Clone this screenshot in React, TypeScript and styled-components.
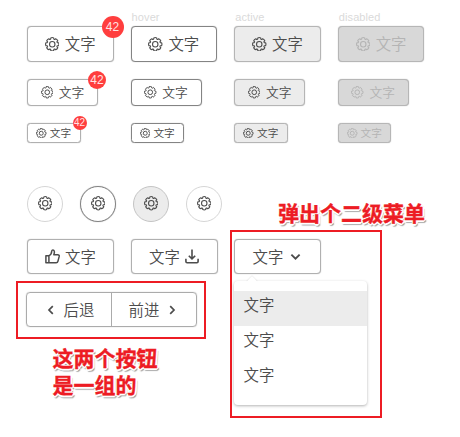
import React from "react";
import styled, { createGlobalStyle, css } from "styled-components";

type Size = "large" | "medium" | "small";
type State = "normal" | "hover" | "active" | "disabled";

const GlobalStyle = createGlobalStyle`
  *, *::before, *::after { box-sizing: border-box; }
  body {
    margin: 0;
    background: #fff;
    font-family: "Noto Sans CJK SC", "Noto Sans", sans-serif;
    color: #4c4c4c;
  }
`;

const Page = styled.main`
  width: 460px;
  height: 437px;
  overflow: hidden;
  padding-top: 10px;
`;

const StateGrid = styled.section`
  display: grid;
  grid-template-columns: repeat(4, 103.6px);
  grid-template-rows: 16px 36px 17px 27px 17px 20px;
  padding-left: 27px;
`;

const StateName = styled.span`
  padding-left: 1px;
  font: 11px/14px "Liberation Sans", Arial, sans-serif;
  letter-spacing: 0.1px;
  color: #dadada;
`;

const GridRow = styled.div<{ $row: number }>`
  grid-row: ${(p) => p.$row};
  grid-column: 1 / -1;
  display: grid;
  grid-template-columns: subgrid;
`;

const sizes = {
  large: css`width: 86.5px; height: 36px; font-size: 15.4px; gap: 5.5px; border-radius: 4px;`,
  medium: css`width: 71px; height: 27px; font-size: 12.8px; gap: 5.5px; border-radius: 4px;`,
  small: css`width: 53.5px; height: 20px; font-size: 10.7px; gap: 3px; border-radius: 3.5px;`,
};

const states = {
  normal: css`border-color: #b0b0b0; background: #fff;`,
  hover: css`border-color: #848484; background: #fff;`,
  active: css`border-color: #b5b5b5; background: #ececec;`,
  disabled: css`border-color: #b6b6b6; background: #d8d8d8; color: #b4b4b4;`,
};

const softEdge = css`box-shadow: 0 0 1px rgba(0, 0, 0, 0.35);`;

const Button = styled.button<{ $size?: Size; $state?: State }>`
  position: relative;
  display: flex;
  align-items: center;
  justify-content: center;
  padding: 0;
  border: 1px solid;
  font-family: inherit;
  font-weight: 350;
  line-height: 1;
  color: #4c4c4c;
  white-space: nowrap;
  ${softEdge}
  ${(p) => sizes[p.$size ?? "large"]}
  ${(p) => states[p.$state ?? "normal"]}
  svg { flex: none; }
`;

const badgeSizes = {
  large: css`width: 22px; height: 22px; top: -11px; right: -11px; font-size: 12px;`,
  medium: css`width: 18px; height: 18px; top: -9px; right: -9px; font-size: 12px;`,
  small: css`width: 14px; height: 14px; top: -8px; right: -7px; font-size: 10px;`,
};

const Badge = styled.span<{ $size: Size }>`
  position: absolute;
  display: flex;
  align-items: center;
  justify-content: center;
  border-radius: 50%;
  background: #ff3e3e;
  color: #ffe3e3;
  font-family: "Liberation Sans", Arial, sans-serif;
  font-weight: 400;
  ${(p) => badgeSizes[p.$size]}
`;

const Lower = styled.div`
  display: flex;
  align-items: flex-start;
  padding: 43px 0 0 16px;
`;

const LeftColumn = styled.section`
  width: 214px;
`;

const RightColumn = styled.section`
  padding-top: 11px;
`;

const CircleRow = styled.div`
  display: flex;
  gap: 17px;
  padding-left: 11px;
`;

const CircleButton = styled.button<{ $state?: State }>`
  width: 36px;
  height: 36px;
  padding: 0 0 1px;
  display: flex;
  align-items: center;
  justify-content: center;
  border: 1px solid;
  border-radius: 50%;
  color: #4c4c4c;
  ${(p) => states[p.$state ?? "normal"]}
  ${(p) => (p.$state ?? "normal") === "normal" && css`border-color: #d6d6d6;`}
  ${(p) => p.$state === "hover" && softEdge}
  ${(p) => p.$state === "active" && css`border-color: #c4c4c4;`}
`;

const ActionRow = styled.div`
  display: flex;
  gap: 17.5px;
  padding: 17px 0 7px 11px;
`;

const ActionButton = styled(Button)`
  height: 35px;
`;

const Frame = styled.div<{ $kind: "group" | "menu" }>`
  border: 2px solid #ed1c24;
  ${(p) =>
    p.$kind === "group"
      ? css`width: 190px; height: 58px; padding: 9px 0 0 8px;`
      : css`width: 152px; height: 188px; padding: 7px 0 0 2px;`}
`;

const ButtonGroup = styled.div`
  display: flex;
  width: 171px;
  height: 35px;
  border: 1px solid #ababab;
  border-radius: 4px;
  ${softEdge}
`;

const GroupItem = styled.button`
  flex: 1;
  display: flex;
  align-items: center;
  justify-content: center;
  gap: 7px;
  padding: 0 0 0 1px;
  border: 0;
  background: transparent;
  font: 350 15.4px/1 "Noto Sans CJK SC", sans-serif;
  color: #4c4c4c;
  & + & {
    padding: 0 1px 0 0;
    border-left: 1px solid #ababab;
  }
`;

const Note = styled.p<{ $kind: "group" | "menu" }>`
  margin: 0;
  font-size: 21px;
  font-weight: 700;
  color: #ed1c24;
  white-space: nowrap;
  -webkit-text-stroke: 0.35px #ed1c24;
  text-shadow: -1px -1px 0 #fff, 1px -1px 0 #fff, -1px 1px 0 #fff, 1px 1px 0 #fff,
    0 2px 0 #fff, 2px 0 0 #fff, 2px 2px 1px #9c9c9c, 1px 3px 1px #b0b0b0;
  ${(p) =>
    p.$kind === "group"
      ? css`padding: 5px 0 0 36.5px; line-height: 27px;`
      : css`padding: 0 0 0 48px; line-height: 31px; height: 33px;`}
`;

const Menu = styled.ul`
  position: relative;
  width: 133px;
  height: 124px;
  margin: 7px 0 0;
  padding: 9.5px 0 0;
  list-style: none;
  background: #fff;
  border-radius: 4px;
  box-shadow: 0 1px 3px rgba(0, 0, 0, 0.3);
  &::before {
    content: "";
    position: absolute;
    left: 14px;
    top: -3px;
    width: 8px;
    height: 8px;
    background: #fff;
    transform: rotate(45deg);
    box-shadow: -1px -1px 1px rgba(0, 0, 0, 0.06);
  }
`;

const MenuItem = styled.li<{ $selected?: boolean }>`
  position: relative;
  height: 35.2px;
  padding-left: 9.5px;
  font-size: 15.4px;
  font-weight: 350;
  line-height: 26.5px;
  background: ${(p) => (p.$selected ? "#ececec" : "transparent")};
`;

const gearPath = (() => {
  const pt = (deg: number, r: number) => {
    const a = (deg * Math.PI) / 180;
    return `${(12 + r * Math.cos(a)).toFixed(2)} ${(12 + r * Math.sin(a)).toFixed(2)}`;
  };
  let d = `M${pt(-13, 10.8)}`;
  for (let i = 0; i < 8; i++) {
    const c = i * 45;
    d += `Q${pt(c, 11.6)} ${pt(c + 13, 10.8)}L${pt(c + 17, 8.9)}Q${pt(c + 22.5, 8.1)} ${pt(c + 28, 8.9)}L${pt(c + 32, 10.8)}`;
  }
  return d + "Z";
})();

const Gear = ({ size = 14.5, weight = 1.8 }: { size?: number; weight?: number }) => (
  <svg width={size} height={size} viewBox="0 0 24 24" fill="none" stroke="currentColor" strokeWidth={weight} strokeLinejoin="round">
    <path d={gearPath} />
    <circle cx="12" cy="12" r="4.5" />
  </svg>
);

const ThumbIcon = () => (
  <svg width="15" height="15" viewBox="0 0 15 15" fill="none" stroke="currentColor" strokeWidth="1.5" strokeLinejoin="round">
    <path d="M.9 6.8h3v7H.9zM3.9 6.8C6 5.8 6.6 4.2 6.7 2.2c.1-1.7 2.5-1.5 2.7.5.1 1-.2 2-.6 3h3.9c1.200 0 1.700.8 1.500 1.700l-1.300 5c-.2.9-.8 1.400-1.700 1.400H3.900" />
  </svg>
);

const DownloadIcon = () => (
  <svg width="14" height="15" viewBox="0 0 14 15" fill="none" stroke="currentColor" strokeWidth="1.6">
    <path d="M7 .6v9M3.800 6.700 7 9.900l3.200-3.200M.9 9.800v2.700q0 1.200 1.200 1.200h9.800q1.200 0 1.200-1.200V9.800" />
  </svg>
);

const Chevron = ({ d, size = 12 }: { d: string; size?: number }) => (
  <svg width={size} height={size} viewBox="0 0 12 12" fill="none" stroke="currentColor" strokeWidth="1.7">
    <path d={d} />
  </svg>
);

const gears = {
  large: { size: 14.5, weight: 1.8 },
  medium: { size: 12.5, weight: 1.9 },
  small: { size: 10.5, weight: 2.2 },
};
const allStates: State[] = ["normal", "hover", "active", "disabled"];
const rows: { size: Size; row: number }[] = [
  { size: "large", row: 2 },
  { size: "medium", row: 4 },
  { size: "small", row: 6 },
];

export default function App() {
  return (
    <>
      <GlobalStyle />
      <Page>
        <StateGrid>
          <GridRow $row={1}>
            {allStates.map((s) => (
              <StateName key={s}>{s === "normal" ? "" : s}</StateName>
            ))}
          </GridRow>
          {rows.map(({ size, row }) => (
            <GridRow key={size} $row={row}>
              {allStates.map((s) => (
                <Button key={s} $size={size} $state={s} disabled={s === "disabled"}>
                  <Gear {...gears[size]} />
                  文字
                  {s === "normal" && <Badge $size={size}>42</Badge>}
                </Button>
              ))}
            </GridRow>
          ))}
        </StateGrid>
        <Lower>
          <LeftColumn>
            <CircleRow>
              {(["normal", "hover", "active", "normal"] as State[]).map((s, i) => (
                <CircleButton key={i} $state={s} aria-label="gear">
                  <Gear />
                </CircleButton>
              ))}
            </CircleRow>
            <ActionRow>
              <ActionButton><ThumbIcon />文字</ActionButton>
              <ActionButton>文字<DownloadIcon /></ActionButton>
            </ActionRow>
            <Frame $kind="group">
              <ButtonGroup>
                <GroupItem><Chevron d="M7.8 2.2 4 6l3.8 3.8" />后退</GroupItem>
                <GroupItem>前进<Chevron d="M4.2 2.2 8 6 4.2 9.8" /></GroupItem>
              </ButtonGroup>
            </Frame>
            <Note $kind="group">这两个按钮<br />是一组的</Note>
          </LeftColumn>
          <RightColumn>
            <Note $kind="menu">弹出个二级菜单</Note>
            <Frame $kind="menu">
              <ActionButton>文字<Chevron size={13} d="M2.2 4.2 6 8l3.8-3.8" /></ActionButton>
              <Menu>
                <MenuItem $selected>文字</MenuItem>
                <MenuItem>文字</MenuItem>
                <MenuItem>文字</MenuItem>
              </Menu>
            </Frame>
          </RightColumn>
        </Lower>
      </Page>
    </>
  );
}
